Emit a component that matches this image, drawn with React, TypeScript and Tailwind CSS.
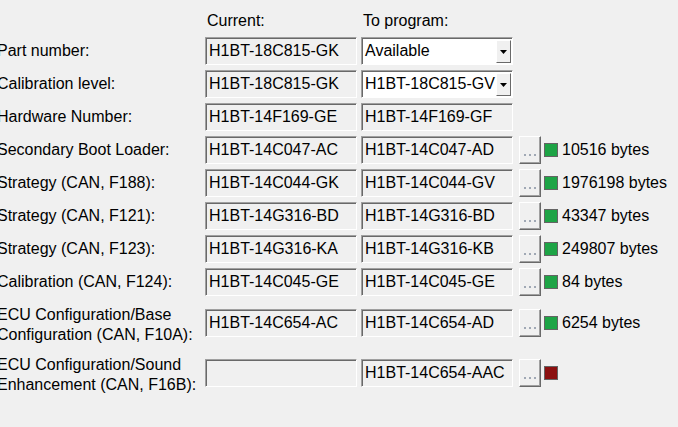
import React from "react";

type Row = {
  label: string[];
  current: string;
  program: string;
  dropdown?: boolean;
  button?: boolean;
  status?: "green" | "red";
  bytes?: string;
};

const rows: Row[] = [
  { label: ["Part number:"], current: "H1BT-18C815-GK", program: "Available", dropdown: true },
  { label: ["Calibration level:"], current: "H1BT-18C815-GK", program: "H1BT-18C815-GV", dropdown: true },
  { label: ["Hardware Number:"], current: "H1BT-14F169-GE", program: "H1BT-14F169-GF" },
  { label: ["Secondary Boot Loader:"], current: "H1BT-14C047-AC", program: "H1BT-14C047-AD", button: true, status: "green", bytes: "10516 bytes" },
  { label: ["Strategy (CAN, F188):"], current: "H1BT-14C044-GK", program: "H1BT-14C044-GV", button: true, status: "green", bytes: "1976198 bytes" },
  { label: ["Strategy (CAN, F121):"], current: "H1BT-14G316-BD", program: "H1BT-14G316-BD", button: true, status: "green", bytes: "43347 bytes" },
  { label: ["Strategy (CAN, F123):"], current: "H1BT-14G316-KA", program: "H1BT-14G316-KB", button: true, status: "green", bytes: "249807 bytes" },
  { label: ["Calibration (CAN, F124):"], current: "H1BT-14C045-GE", program: "H1BT-14C045-GE", button: true, status: "green", bytes: "84 bytes" },
];

const twoLine: Row[] = [
  { label: ["ECU Configuration/Base", "Configuration (CAN, F10A):"], current: "H1BT-14C654-AC", program: "H1BT-14C654-AD", button: true, status: "green", bytes: "6254 bytes" },
  { label: ["ECU Configuration/Sound", "Enhancement (CAN, F16B):"], current: "", program: "H1BT-14C654-AAC", button: true, status: "red" },
];

function TextBox({ text }: { text: string }) {
  return (
    <div className="w-[152px] h-[28px] shrink-0 flex items-center border border-t-[#a0a0a0] border-l-[#a0a0a0] border-b-white border-r-white shadow-[inset_1px_1px_0_#696969] bg-[#f0f0f0] pl-[3px] whitespace-nowrap overflow-hidden">
      {text}
    </div>
  );
}

function Dropdown({ text }: { text: string }) {
  return (
    <div className="w-[152px] h-[28px] shrink-0 flex items-stretch border border-t-[#a0a0a0] border-l-[#a0a0a0] border-b-white border-r-white shadow-[inset_1px_1px_0_#696969] bg-white whitespace-nowrap overflow-hidden">
      <div className="flex-1 flex items-center pl-[3px] overflow-hidden">{text}</div>
      <div className="w-[15px] mt-[2px] mb-[1px] mr-[1px] bg-[#f0f0f0] border border-t-white border-l-white border-r-[#696969] border-b-[#696969] flex items-center justify-center">
        <svg width="7" height="4" viewBox="0 0 7 4">
          <path d="M0 0 H7 L3.5 4 Z" fill="#000" />
        </svg>
      </div>
    </div>
  );
}

function DotsButton() {
  return (
    <div className="w-[22px] h-[28px] shrink-0 ml-[6px] bg-[#f0f0f0] border border-t-white border-l-white border-r-[#696969] border-b-[#696969] shadow-[inset_-1px_-1px_0_#a0a0a0] flex items-end justify-center gap-[3px] pb-[7px]">
      <span className="w-[2px] h-[2px] bg-[#a0a8b4]" />
      <span className="w-[2px] h-[2px] bg-[#a0a8b4]" />
      <span className="w-[2px] h-[2px] bg-[#a0a8b4]" />
    </div>
  );
}

function Controls({ r }: { r: Row }) {
  return (
    <div className="flex items-center h-[28px]">
      <TextBox text={r.current} />
      <div className="ml-[4px]">{r.dropdown ? <Dropdown text={r.program} /> : <TextBox text={r.program} />}</div>
      {r.button && <DotsButton />}
      {r.status && (
        <div
          className={
            r.status === "green"
              ? "ml-[3px] w-[14px] h-[14px] shrink-0 border border-[#646464] bg-[#1ea446]"
              : "ml-[3px] w-[14px] h-[14px] shrink-0 border border-[#646464] bg-[#8b1010]"
          }
        />
      )}
      {r.bytes && <div className="ml-[4px] whitespace-nowrap">{r.bytes}</div>}
    </div>
  );
}

export default function App() {
  return (
    <div className="w-[678px] h-[427px] bg-[#f0f0f0] overflow-hidden text-[16px] text-black font-['Liberation_Sans','Arial',sans-serif]">
      <div className="pt-[11px]">
        <div className="flex leading-[20px] pl-[207px]">
          <div className="w-[156px]">Current:</div>
          <div>To program:</div>
        </div>
        <div className="mt-[6px] flex flex-col gap-[5px]">
          {rows.map((r, i) => (
            <div key={i} className="flex items-center h-[28px]">
              <div className="w-[208px] ml-[-3px] shrink-0 whitespace-nowrap">{r.label[0]}</div>
              <Controls r={r} />
            </div>
          ))}
          <div className="flex items-start mt-[4px]">
            <div className="w-[208px] ml-[-3px] shrink-0 whitespace-nowrap leading-[20px]">
              {twoLine[0].label.map((l, j) => (
                <div key={j}>{l}</div>
              ))}
            </div>
            <div className="mt-[4px]">
              <Controls r={twoLine[0]} />
            </div>
          </div>
          <div className="flex items-start mt-[5px]">
            <div className="w-[208px] ml-[-3px] shrink-0 whitespace-nowrap leading-[20px]">
              {twoLine[1].label.map((l, j) => (
                <div key={j}>{l}</div>
              ))}
            </div>
            <div className="mt-[4px]">
              <Controls r={twoLine[1]} />
            </div>
          </div>
        </div>
      </div>
    </div>
  );
}
